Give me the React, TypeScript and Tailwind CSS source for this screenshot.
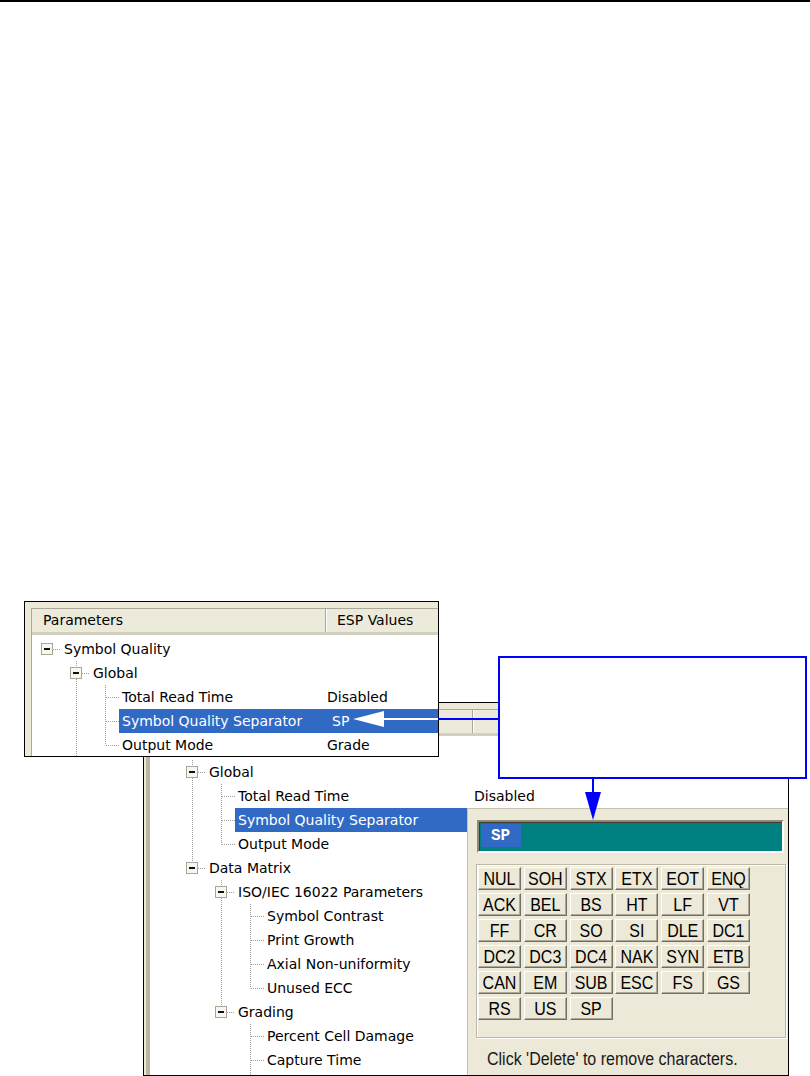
import React from "react";

type TNode = { label: string; value?: string; selected?: boolean; children?: TNode[] };
type Row = {
  label: string;
  value?: string;
  selected?: boolean;
  level: number;
  hasBox: boolean;
  last: boolean;
  anc: boolean[];
};

function flatten(nodes: TNode[], level = 0, anc: boolean[] = [], out: Row[] = []): Row[] {
  nodes.forEach((n, i) => {
    const last = i === nodes.length - 1;
    out.push({ label: n.label, value: n.value, selected: n.selected, level, hasBox: !!n.children, last, anc });
    if (n.children) flatten(n.children, level + 1, [...anc, !last], out);
  });
  return out;
}

const globalNode: TNode = {
  label: "Global",
  children: [
    { label: "Total Read Time", value: "Disabled" },
    { label: "Symbol Quality Separator", value: "SP", selected: true },
    { label: "Output Mode", value: "Grade" },
  ],
};

const frontTree: TNode[] = [
  {
    label: "Symbol Quality",
    children: [globalNode, { label: "Data Matrix", children: [{ label: "ISO/IEC 16022 Parameters" }] }],
  },
];

const backTree: TNode[] = [
  {
    label: "Symbol Quality",
    children: [
      globalNode,
      {
        label: "Data Matrix",
        children: [
          {
            label: "ISO/IEC 16022 Parameters",
            children: [
              { label: "Symbol Contrast" },
              { label: "Print Growth" },
              { label: "Axial Non-uniformity" },
              { label: "Unused ECC" },
            ],
          },
          {
            label: "Grading",
            children: [{ label: "Percent Cell Damage" }, { label: "Capture Time" }, { label: "Decode Time" }],
          },
        ],
      },
    ],
  },
];

const DOT = "#a0a0a0";

function Guide({ on }: { on: boolean }) {
  return (
    <svg width="29" height="24" className="block shrink-0">
      {on && <line x1="6.5" y1="0" x2="6.5" y2="24" stroke={DOT} strokeDasharray="1 1" />}
    </svg>
  );
}

function Own({ row }: { row: Row }) {
  return (
    <svg width="20" height="24" className="block shrink-0">
      {row.level > 0 && (
        <line x1="6.5" y1="0" x2="6.5" y2={row.last ? 12.5 : 24} stroke={DOT} strokeDasharray="1 1" />
      )}
      <line x1={row.hasBox ? 12 : 7} y1="12.5" x2="20" y2="12.5" stroke={DOT} strokeDasharray="1 1" />
      {row.hasBox && (
        <g>
          <rect x="0.5" y="6.5" width="11" height="11" fill="#f7f6f1" stroke="#aaa691" />
          <rect x="3" y="11" width="6" height="2" fill="#111" />
        </g>
      )}
    </svg>
  );
}

function TreeRow({ row, nameCls }: { row: Row; nameCls: string }) {
  const sel = !!row.selected;
  return (
    <div className="flex h-[24px] items-stretch whitespace-nowrap">
      <div className={`flex shrink-0 items-center ${nameCls}`}>
        {row.anc.map((on, k) => (
          <Guide key={k} on={on} />
        ))}
        <Own row={row} />
        <div
          className={`flex h-full min-w-0 flex-1 items-center overflow-hidden pl-[3px] ${
            sel ? "bg-[#316ac5] text-white" : "text-black"
          }`}
        >
          {row.label}
        </div>
      </div>
      <div className={`flex flex-1 items-center pl-[1px] ${sel ? "bg-[#316ac5] text-white" : "text-black"}`}>
        {row.value ? <span className={sel ? "pl-[5px]" : ""}>{row.value}</span> : null}
      </div>
    </div>
  );
}

function Header({ nameCls, name, value }: { nameCls: string; name: string; value: string }) {
  return (
    <div className="flex h-[26px] border-b-[3px] border-b-[#d3cfbe] bg-[#ebeadb] text-black">
      <div className={`flex shrink-0 items-center border-r border-r-[#aca899] ${nameCls}`}>{name}</div>
      <div className="flex flex-1 items-center border-l border-l-white pl-[10px]">{value}</div>
    </div>
  );
}

function FrontWindow() {
  const rows = flatten(frontTree);
  return (
    <div className="absolute left-[24px] top-0 z-20 h-[156px] w-[415px] overflow-hidden border border-black bg-[#ece9d8] pl-[6px] pt-[6px] font-['DejaVu_Sans',sans-serif] text-[14px]">
      <div className="h-full border-l border-t border-[#aca899] bg-white">
        <Header nameCls="w-[294px] pl-[11px]" name="Parameters" value="ESP Values" />
        <div className="pt-[2px]">
          {rows.map((r, i) => (
            <TreeRow key={i} row={r} nameCls="w-[294px] pl-[9px]" />
          ))}
        </div>
      </div>
    </div>
  );
}

const KEYS = [
  "NUL", "SOH", "STX", "ETX", "EOT", "ENQ",
  "ACK", "BEL", "BS", "HT", "LF", "VT",
  "FF", "CR", "SO", "SI", "DLE", "DC1",
  "DC2", "DC3", "DC4", "NAK", "SYN", "ETB",
  "CAN", "EM", "SUB", "ESC", "FS", "GS",
  "RS", "US", "SP",
];

function Popup() {
  return (
    <div className="absolute bottom-0 left-[323px] right-0 top-[105px] border-l border-t border-[#c6c2ae] bg-[#ece9d8] pl-[8px] pt-[11px] font-['Liberation_Sans',Arial,sans-serif]">
      <div className="ml-[1px] flex h-[33px] w-[307px] items-start border-2 border-b-white border-l-[#8d8a78] border-r-white border-t-[#8d8a78] bg-[#008080] shadow-[inset_1px_1px_0_#3d3c33]">
        <div className="ml-[2px] mt-[2px] flex h-[23px] w-[40px] items-center bg-[#316ac5] pl-[10px] font-['Liberation_Mono',monospace] text-[16px] font-bold text-white">
          SP
        </div>
      </div>
      <div className="mt-[11px] h-[174px] w-[310px] border border-[#bcb8a4] pl-[1px] pt-[2px] shadow-[inset_1px_1px_0_#ffffff,1px_1px_0_#ffffff]">
        <div className="grid grid-cols-[repeat(6,43px)] gap-x-[2.8px] gap-y-[3px]">
          {KEYS.map((k) => (
            <div
              key={k}
              className="flex h-[23px] items-center justify-center border border-b-[#716f64] border-l-white border-r-[#716f64] border-t-white bg-[#ece9d8] text-[16px] leading-none text-black shadow-[inset_-1px_-1px_0_#aca899]"
            >
              <span className="inline-block scale-y-[1.12]">{k}</span>
            </div>
          ))}
        </div>
      </div>
      <div className="mt-[11px] pl-[11px] text-[16px] leading-[20px] text-[#1a1a1a]">
        <span className="inline-block scale-y-[1.1]">Click 'Delete' to remove characters.</span>
      </div>
    </div>
  );
}

function BackWindow() {
  const rows = flatten(backTree);
  return (
    <div className="absolute left-[143px] top-[101px] z-10 h-[374px] w-[646px] overflow-hidden border border-black bg-[#ece9d8] pl-[2px] pt-[6px] font-['DejaVu_Sans',sans-serif] text-[14px]">
      <div className="h-full border-l-4 border-t border-l-[#bab69f] border-t-[#aca899] bg-white">
        <Header nameCls="w-[323px] pl-[11px]" name="Parameters" value="" />
        <div>
          {rows.map((r, i) => (
            <TreeRow key={i} row={r} nameCls="w-[323px] pl-[7px]" />
          ))}
        </div>
      </div>
      <Popup />
    </div>
  );
}

function Overlay() {
  return (
    <svg
      className="pointer-events-none absolute left-0 top-0 z-30"
      width="810"
      height="475"
      viewBox="0 0 810 475"
    >
      <line x1="380" y1="118" x2="438" y2="118" stroke="#ffffff" strokeWidth="2" />
      <polygon points="353,118 384,110 384,126" fill="#ffffff" />
      <line x1="438" y1="118" x2="499" y2="118" stroke="#0000ff" strokeWidth="2" />
      <rect x="499" y="56" width="307" height="121" fill="#ffffff" stroke="#0000ff" strokeWidth="2" />
      <line x1="593" y1="177" x2="593" y2="193" stroke="#0000ff" strokeWidth="2" />
      <polygon points="585,191 601,191 593,219" fill="#0000ff" />
    </svg>
  );
}

export default function App() {
  return (
    <div className="h-[1076px] w-[810px] overflow-hidden bg-white">
      <div className="h-[2px] w-full bg-black" />
      <div className="relative mt-[599px] h-[475px] w-[810px]">
        <BackWindow />
        <FrontWindow />
        <Overlay />
      </div>
    </div>
  );
}
